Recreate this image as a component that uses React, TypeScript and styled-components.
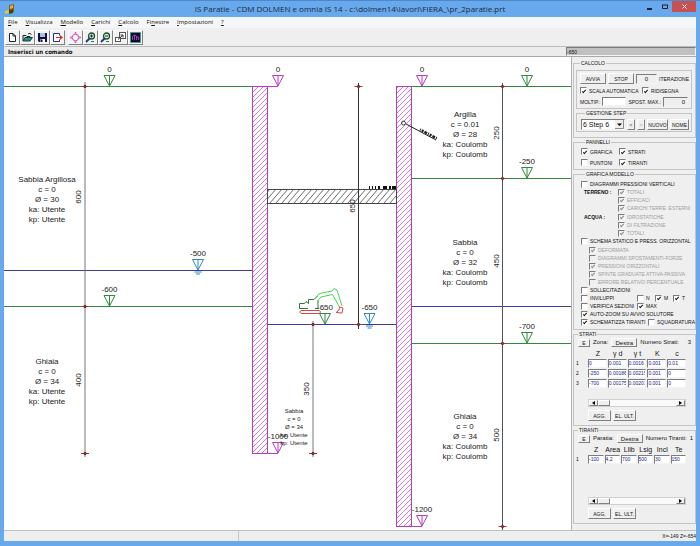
import React, { useState } from "react";
import styled, { createGlobalStyle, css } from "styled-components";

const sans = '"Liberation Sans", Arial, sans-serif';

const GlobalStyle = createGlobalStyle`
  *, *::before, *::after { box-sizing: border-box; }
  body { margin: 0; background: #68a8ec; font-family: ${sans}; color: #111; }
  button, input, select { font: inherit; color: inherit; margin: 0; padding: 0; }
`;

const raised = css`
  border: 1px solid;
  border-color: #fff #808080 #808080 #fff;
`;
const sunken = css`
  border: 1px solid;
  border-color: #7c7c7c #f4f4f4 #f4f4f4 #7c7c7c;
`;

const Window = styled.div`
  display: flex;
  flex-direction: column;
  height: 100vh;
  padding: 0 4px 5px;
  background: #68a8ec;
  border-top: 1px solid #4f88c8;
  overflow: hidden;
`;

const TitleBar = styled.header`
  display: grid;
  grid-template-columns: 70px 1fr 70px;
  height: 16px;
  flex: none;
`;

const AppIcon = styled.svg`
  width: 12px;
  height: 12px;
  margin: 2px 0 0 1px;
`;

const Title = styled.h1`
  margin: 0;
  font: 400 8px/16px "Open Sans", sans-serif;
  text-align: center;
  white-space: nowrap;
  color: #1c2a3c;
`;

const WindowButtons = styled.div`
  display: flex;
  justify-content: flex-end;
  height: 11px;
`;

const WindowButton = styled.button<{ $close?: boolean }>`
  display: grid;
  place-items: center;
  width: ${(p) => (p.$close ? 24 : 15)}px;
  height: 11px;
  border: 0;
  background: ${(p) => (p.$close ? "#c75050" : "transparent")};
`;

const MenuBar = styled.nav`
  display: flex;
  flex: none;
  gap: 8px;
  height: 11px;
  padding-left: 4px;
  background: #f5f6f7;
  font: 6px/11px "Open Sans", sans-serif;
`;

const MenuItem = styled.a`
  color: #111;
  text-decoration: none;
`;

const Toolbar = styled.div`
  display: flex;
  flex: none;
  gap: 3px;
  height: 19px;
  padding: 2px 1px;
  background: #efefef;
  border-bottom: 1px solid #bcbcbc;
`;

const ToolGroup = styled.div`
  display: flex;
`;

const ToolButton = styled.button`
  ${raised}
  display: grid;
  place-items: center;
  width: 15px;
  height: 15px;
  background: #f2f2f2;
`;

const CommandBar = styled.div`
  display: flex;
  flex: none;
  height: 10px;
  background: #ececec;
  border-bottom: 1px solid #a8a8a8;
`;

const Prompt = styled.div`
  flex: 1;
  padding-left: 4px;
  font: 700 6px/10px "DejaVu Sans Condensed", ${sans};
`;

const CommandInput = styled.input`
  ${sunken}
  width: 130px;
  height: 9px;
  background: #c0c0c0;
  font: 5px/7px ${sans};
`;

const Main = styled.main`
  display: flex;
  flex: 1;
  min-height: 0;
  background: #fff;
`;

const Drawing = styled.svg`
  flex: 1;
  min-width: 0;
  height: 100%;
  font-family: ${sans};
  background: #fff;
`;

const Side = styled.aside`
  flex: none;
  width: 125px;
  padding: 2px 0 0 1px;
  background: #efefef;
  border-left: 1px solid #b0b0b0;
  font: 5px/8px ${sans};
  white-space: nowrap;
  overflow: hidden;
`;

const Group = styled.fieldset<{ $pad: string; $inset?: boolean }>`
  min-width: 0;
  margin: 0 ${(p) => (p.$inset ? 3 : 0)}px 0 0;
  padding: ${(p) => p.$pad};
  border: 1px solid #c4c4c4;
`;

const Legend = styled.legend`
  margin-left: 4px;
  padding: 0 1px;
  font: 5px/8px ${sans};
`;

const Frame = styled.div`
  display: grid;
  grid-template-rows: 11px 9px 9px;
  row-gap: 2px;
  margin-right: 3px;
  height: 39px;
  padding: 2px 3px;
  border: 1px solid #c4c4c4;
`;

const Row = styled.div<{ $h?: number; $gap?: number; $left?: number; $top?: number }>`
  display: flex;
  align-items: center;
  height: ${(p) => p.$h ?? 8}px;
  gap: ${(p) => p.$gap ?? 0}px;
  padding-left: ${(p) => p.$left ?? 0}px;
  margin-top: ${(p) => p.$top ?? 0}px;
`;

const PushButton = styled.button<{ $w: number; $h?: number; $big?: boolean }>`
  ${raised}
  display: grid;
  place-items: center;
  flex: none;
  width: ${(p) => p.$w}px;
  height: ${(p) => p.$h ?? 11}px;
  background: #efefef;
  font: ${(p) => (p.$big ? 6 : 5)}px/6px ${sans};
  &:disabled { color: #999; }
`;

const Readout = styled.output<{ $w: number }>`
  ${sunken}
  flex: none;
  width: ${(p) => p.$w}px;
  height: 10px;
  padding: 0 2px;
  font: 6px/8px ${sans};
  text-align: ${(p) => (p.$w > 22 ? "right" : "center")};
`;

const Field = styled.input`
  ${sunken}
  width: 24px;
  height: 9px;
  background: #fff;
`;

const StepSelect = styled.select`
  ${sunken}
  width: 44px;
  height: 11px;
  padding-left: 1px;
  appearance: none;
  border-radius: 0;
  background: #fff;
  font: 7px/9px ${sans};
`;

const SelectWrap = styled.div`
  position: relative;
  display: flex;
  svg {
    position: absolute;
    right: 1px;
    top: 1px;
    pointer-events: none;
  }
`;

const CheckLabel = styled.label<{ $w?: number }>`
  display: flex;
  align-items: center;
  gap: 2px;
  width: ${(p) => (p.$w ? p.$w + "px" : "auto")};
  flex: none;
  font: 5px/8px ${sans};
  &:has(input:disabled) { color: #9c9c9c; }
`;

const Check = styled.input`
  ${sunken}
  appearance: none;
  display: grid;
  place-items: center;
  width: 7px;
  height: 7px;
  background: #fff;
  color: #111;
  &:disabled { background: #efefef; color: #8a8a8a; }
  &:checked::before {
    content: "";
    width: 2px;
    height: 4px;
    border: solid currentColor;
    border-width: 0 1px 1px 0;
    transform: rotate(42deg);
  }
`;

const Caption = styled.span<{ $w: number }>`
  width: ${(p) => p.$w}px;
  padding-left: 3px;
  font-weight: 700;
`;

const Head = styled.div`
  display: flex;
  align-items: center;
  gap: 3px;
  height: 9px;
  padding: 0 4px 0 4px;
  font: 6px/9px ${sans};
`;

const Count = styled.output`
  margin-left: auto;
`;

const Grid = styled.table`
  margin-top: 1px;
  border-collapse: collapse;
  table-layout: fixed;
  width: 113px;
  th {
    padding: 0;
    height: 7px;
    font: 7px/7px ${sans};
    text-align: center;
  }
  td { padding: 0 1px 0 0; height: 10px; }
  td:first-child { width: 14px; padding-left: 2px; font: 5px/8px ${sans}; }
`;

const Cell = styled.input`
  ${sunken}
  display: block;
  width: 100%;
  height: 9px;
  background: #fff;
  color: #20208c;
  font: 5px/7px ${sans};
`;

const ScrollBar = styled.div<{ $top: number }>`
  display: grid;
  grid-template-columns: 9px 12px 1fr 9px;
  width: 98px;
  height: 8px;
  margin: ${(p) => p.$top}px 0 3px 14px;
  background: #fafafa;
  border: 1px solid #d0d0d0;
`;

const ScrollPart = styled.button`
  ${raised}
  display: grid;
  place-items: center;
  background: #efefef;
`;

const Actions = styled.div`
  display: flex;
  gap: 2px;
  padding-left: 14px;
`;

const StatusBar = styled.footer`
  display: grid;
  grid-template-columns: 234px 1fr;
  column-gap: 1px;
  flex: none;
  height: 11px;
  background: #c4c4c4;
  border-top: 1px solid #c0c0c0;
  font: 5px/10px ${sans};
  text-align: right;
  white-space: nowrap;
  span { background: #eee; }
`;

function Tick({ label, on, off, w }: { label: string; on?: boolean; off?: boolean; w?: number }) {
  const [checked, setChecked] = useState(!!on);
  return (
    <CheckLabel $w={w}>
      <Check type="checkbox" checked={checked} disabled={off} onChange={() => setChecked(!checked)} />
      {label}
    </CheckLabel>
  );
}

const GREEN = "#2f8a3c";
const BLUE = "#3c3c9c";
const PINK = "#b83cc0";
const CYAN = "#2c8cc0";

function Level({ x, y, text, color, water }: { x: number; y: number; text: string; color: string; water?: boolean }) {
  return (
    <g stroke={color} fill="none" strokeWidth="1">
      <path d={`M${x - 5.5} ${y - 10.5}H${x + 5.5}L${x} ${y}ZM${x} ${y - 10}V${y}`} />
      {water && <path d={`M${x - 3.5} ${y + 2}h7M${x - 2} ${y + 4}h4`} />}
      <text x={x} y={y - 14} textAnchor="middle" fontSize="8" fill="#222" stroke="none">{text}</text>
    </g>
  );
}

function Soil({ x, y, lines, small }: { x: number; y: number; lines: string[]; small?: boolean }) {
  return (
    <g fontSize={small ? 6 : 8} fill="#222" textAnchor="middle">
      {lines.map((line, i) => (
        <text key={i} x={x} y={y + i * (small ? 8 : 10)}>{line}</text>
      ))}
    </g>
  );
}

function Dimension({ x, from, to, marks, color }: { x: number; from: number; to: number; marks: number[]; color: string }) {
  return (
    <g fill="none">
      <path d={`M${x} ${from}V${to}`} stroke={color} />
      {marks.map((m) => (
        <g key={m}>
          <path d={`M${x - 4} ${m}h8`} stroke="#b03838" />
          <circle cx={x} cy={m} r="1.2" stroke="#5a2020" />
        </g>
      ))}
    </g>
  );
}

function Turned({ x, y, children }: { x: number; y: number; children: string }) {
  return (
    <text transform={`translate(${x} ${y}) rotate(-90)`} textAnchor="middle" fontSize="8" fill="#222">
      {children}
    </text>
  );
}

function Section() {
  return (
    <Drawing viewBox="4 57 567 473" role="img" aria-label="Sezione delle paratie">
      <defs>
        <pattern id="wall" width="5" height="5" patternUnits="userSpaceOnUse">
          <path d="M-1 6L6 -1M-1 1L1 -1M4 6L6 4" stroke="#c05cc8" strokeWidth="0.8" />
        </pattern>
        <pattern id="slab" width="6" height="7" patternUnits="userSpaceOnUse">
          <path d="M0 7L6 0M-1 1.2L1 -1.2M5 8.2L7 5.8" stroke="#444" strokeWidth="0.8" />
        </pattern>
      </defs>
      <g stroke={GREEN}>
        <path d="M4 86.5H252M4 306.5H252M411 86.5H571M411 178.5H571M411 343.5H571" />
      </g>
      <path d="M4 270.5H252M267 324.5H396M411 306.5H571" stroke={BLUE} />
      <g stroke={PINK} fill="url(#wall)">
        <rect x="252.5" y="86.5" width="15" height="367" />
        <rect x="396.5" y="86.5" width="15" height="440" />
        <path d="M267 86.5H278M267 453.5H278M411 526.5H422" />
      </g>
      <rect x="267.5" y="189.5" width="129" height="14" fill="url(#slab)" stroke="#444" />
      <path d="M369 187.5h1m2 0h1m2 0h1m2 0h2m3 0h4m2 0h2m1 0h4" stroke="#111" strokeWidth="3" />

      <Dimension x={85} from={82} to={457} marks={[86.5, 306.5, 453.5]} color="#777" />
      <Dimension x={358.5} from={83} to={329} marks={[86.5, 324.5]} color="#333" />
      <Dimension x={313} from={321} to={457} marks={[324.5, 453.5]} color="#777" />
      <Dimension x={502.5} from={83} to={530} marks={[86.5, 178.5, 343.5, 526.5]} color="#555" />

      <g fill="none" strokeWidth="1">
        <path d="M299.500 308.500V303.500H304.500L306 301.500L308.500 303.500V299.500H314L317.500 296M299.500 308.500H308M315 308.500H318V300" stroke="#2c7c34" />
        <path d="M316 298L318 294.500L322 293L332 291L334 288.500L337 290L342 306M318.500 300L321 297L332.500 294.500L339.500 307" stroke="#4cd454" />
        <path d="M301 310.500H319.500Q321.500 312 319.500 313.500H301Q298.500 312 301 310.500ZM339.500 307L343 308L342 313L336 312.500L339 310Z" stroke="#d84848" />
      </g>

      <Level x={109.5} y={86} text="0" color={GREEN} />
      <Level x={278} y={86} text="0" color={PINK} />
      <Level x={422} y={86} text="0" color={PINK} />
      <Level x={527} y={86} text="0" color={GREEN} />
      <Level x={198} y={270} text="-500" color={CYAN} water />
      <Level x={109.5} y={306} text="-600" color={GREEN} />
      <Level x={325} y={324} text="-650" color={GREEN} />
      <Level x={369.5} y={324} text="-650" color={CYAN} water />
      <Level x={278} y={453} text="-1000" color={PINK} />
      <Level x={422} y={526} text="-1200" color={PINK} />
      <Level x={527} y={178} text="-250" color={GREEN} />
      <Level x={527} y={343} text="-700" color={GREEN} />

      <Turned x={81} y={197}>600</Turned>
      <Turned x={81} y={380}>400</Turned>
      <Turned x={355} y={206}>650</Turned>
      <Turned x={309} y={389}>350</Turned>
      <Turned x={499} y={133}>250</Turned>
      <Turned x={499} y={261}>450</Turned>
      <Turned x={499} y={435}>500</Turned>

      <Soil x={47} y={182} lines={["Sabbia Argillosa", "c = 0", "Ø = 30", "ka: Utente", "kp: Utente"]} />
      <Soil x={47} y={364} lines={["Ghiaia", "c = 0", "Ø = 34", "ka: Utente", "kp: Utente"]} />
      <Soil x={465} y={117} lines={["Argilla", "c = 0.01", "Ø = 28", "ka: Coulomb", "kp: Coulomb"]} />
      <Soil x={465} y={245} lines={["Sabbia", "c = 0", "Ø = 32", "ka: Coulomb", "kp: Coulomb"]} />
      <Soil x={465} y={419} lines={["Ghiaia", "c = 0", "Ø = 34", "ka: Coulomb", "kp: Coulomb"]} />
      <Soil small x={294} y={413} lines={["Sabbia", "c = 0", "Ø = 34", "ka: Utente", "kp: Utente"]} />

      <g stroke="#222" fill="none">
        <circle cx="403.500" cy="123" r="2" strokeWidth="0.800" />
        <path d="M406 124L436 140" />
        <path d="M420 129.500L437 138.500" strokeWidth="2.500" strokeDasharray="1 1 2 1 3 1" />
      </g>
    </Drawing>
  );
}

const toolIcons: React.ReactNode[][] = [
  [
    <path d="M2.500 1.500H6L8.500 4V9.500H2.500ZM6 1.500V4H8.500" fill="#fff" stroke="#222" />,
    <>
      <path d="M1 9V3.500H4L5 4.500H8V6" fill="#e8e8a0" stroke="#222" />
      <path d="M1 9L3 5.500H10.500L8 9Z" fill="#2c8c8c" stroke="#144" />
      <path d="M6 2Q8 0.500 9.500 2.500" fill="none" stroke="#222" />
    </>,
    <>
      <path d="M1 1H10V10H2L1 9Z" fill="#101048" />
      <path d="M3 1H8V5H3Z" fill="#a8c0e8" />
      <path d="M3.500 7H8V10H3.500Z" fill="#fff" />
      <path d="M4 7.500H5.500V10H4Z" fill="#101048" />
    </>,
    <>
      <path d="M7.500 3.500V1.500H1.500V9.500H7.500V7.500" fill="#fff" stroke="#2828a0" />
      <path d="M4 5.500H9" stroke="#d82828" />
      <path d="M8 3L11 5.500L8 8Z" fill="#d82828" />
    </>,
  ],
  [
    <>
      <circle cx="5.500" cy="5.500" r="3.200" fill="#fff" stroke="#d040b8" />
      <path d="M4.500 1.500L5.500 0L6.500 1.500M4.500 9.500L5.500 11L6.500 9.500M1.500 4.500L0 5.500L1.500 6.500M9.500 4.500L11 5.500L9.500 6.500" fill="#d040b8" stroke="#d040b8" strokeWidth="0.600" />
    </>,
    <>
      <path d="M1 10L4.500 6.500" stroke="#203c80" strokeWidth="2" />
      <circle cx="6.500" cy="4" r="3" fill="#d8f0e0" stroke="#1c4c34" strokeWidth="1.300" />
      <path d="M5 4H8M6.500 2.500V5.500" stroke="#103020" />
      <path d="M6 9.500H9" stroke="#2c7c34" />
    </>,
    <>
      <path d="M1 10L4.500 6.500" stroke="#203c80" strokeWidth="2" />
      <circle cx="6.500" cy="4" r="3" fill="#d8f0e0" stroke="#1c4c34" strokeWidth="1.300" />
      <path d="M5 4H8" stroke="#103020" />
      <path d="M6 9.500H9" stroke="#2c7c34" />
    </>,
    <>
      <rect x="4.500" y="0.500" width="6" height="6" fill="#fff" stroke="#555" />
      <rect x="0.500" y="5.500" width="5" height="4" fill="#fff" stroke="#555" />
      <path d="M3 7.500L8 3M5.500 3H8V5.500" fill="none" stroke="#333" />
    </>,
    <>
      <rect x="0.500" y="0.500" width="10" height="10" fill="#101020" stroke="#2c9c9c" strokeDasharray="2 1" />
      <path d="M2.500 8V4.500L4.500 3L6.500 4V8M6.500 5H8.500V8M4.500 3V8" fill="none" stroke="#a03cc0" />
    </>,
  ],
];
const toolNames = [
  ["Nuovo", "Apri", "Salva", "Esci"],
  ["Zoom tutto", "Zoom avanti", "Zoom indietro", "Zoom finestra", "Ridisegna"],
];

const menus = [["", "F", "ile"], ["", "V", "isualizza"], ["", "M", "odello"], ["", "C", "arichi"], ["", "C", "alcolo"], ["Fi", "n", "estre"], ["", "I", "mpostazioni"], ["", "?", ""]];

function Scroller({ top }: { top: number }) {
  return (
    <ScrollBar $top={top}>
      <ScrollPart aria-label="Scorri a sinistra"><svg width="3" height="4"><path d="M3 0V4L0 2Z" /></svg></ScrollPart>
      <ScrollPart aria-label="Cursore" />
      <span />
      <ScrollPart aria-label="Scorri a destra"><svg width="3" height="4"><path d="M0 0V4L3 2Z" /></svg></ScrollPart>
    </ScrollBar>
  );
}

function Table({ heads, rows }: { heads: string[]; rows: string[][] }) {
  return (
    <Grid>
      <thead>
        <tr>
          <td />
          {heads.map((h) => <th key={h} scope="col">{h}</th>)}
        </tr>
      </thead>
      <tbody>
        {rows.map((row, r) => (
          <tr key={r}>
            <td>{r + 1}</td>
            {row.map((value, c) => (
              <td key={c}><Cell aria-label={`${heads[c]} ${r + 1}`} defaultValue={value} /></td>
            ))}
          </tr>
        ))}
      </tbody>
    </Grid>
  );
}

export default function App() {
  return (
    <Window>
      <GlobalStyle />
      <TitleBar>
        <AppIcon viewBox="0 0 12 12" aria-hidden="true">
          <path d="M4 2L9 1V9L4 10Z" fill="#8c5c1c" />
          <path d="M5 3L8 2V5L5 6Z" fill="#e8b030" />
          <path d="M0 8L4 7V10L0 11Z" fill="#f0c040" />
          <path d="M4 7L8 6.500V10L4 11Z" fill="#384820" />
        </AppIcon>
        <Title>IS Paratie - CDM DOLMEN e omnia IS 14 - c:\dolmen14\lavori\FIERA_\pr_2paratie.prt</Title>
        <WindowButtons>
          <WindowButton aria-label="Riduci"><svg width="5" height="7"><path d="M0 6H5" stroke="#222" strokeWidth="2" /></svg></WindowButton>
          <WindowButton aria-label="Ingrandisci"><svg width="6" height="5"><path d="M0.500 1V4.500H5.500V1M0 1H6" fill="none" stroke="#222" /></svg></WindowButton>
          <WindowButton $close aria-label="Chiudi"><svg width="5" height="5"><path d="M0.500 0.500L4.500 4.500M4.500 0.500L0.500 4.500" stroke="#fff" /></svg></WindowButton>
        </WindowButtons>
      </TitleBar>
      <MenuBar>
        {menus.map(([a, b, c]) => (
          <MenuItem key={b + c} href="#">{a}<u>{b}</u>{c}</MenuItem>
        ))}
      </MenuBar>
      <Toolbar>
        {toolIcons.map((group, g) => (
          <ToolGroup key={g}>
            {group.map((icon, i) => (
              <ToolButton key={i} aria-label={toolNames[g][i]}>
                <svg width="11" height="11" viewBox="0 0 11 11">{icon}</svg>
              </ToolButton>
            ))}
          </ToolGroup>
        ))}
      </Toolbar>
      <CommandBar>
        <Prompt>Inserisci un comando</Prompt>
        <CommandInput aria-label="Comando" defaultValue="-650" />
      </CommandBar>
      <Main>
        <Section />
        <Side>
          <Group $pad="3px 0 5px 2px">
            <Legend>CALCOLO</Legend>
            <Frame>
              <Row $h={11} $gap={2}>
                <PushButton $w={26}>AVVIA</PushButton>
                <PushButton $w={26}>STOP</PushButton>
                <Readout $w={21}>0</Readout>
                ITERAZIONE
              </Row>
              <Row $h={9}>
                <Tick label="SCALA AUTOMATICA" on w={62} />
                <Tick label="RIDISEGNA" on />
              </Row>
              <Row $h={9} $gap={2}>
                <label htmlFor="moltip">MOLTIP.:</label>
                <Field id="moltip" />
                <span>SPOST. MAX.:</span>
                <Readout $w={25}>0</Readout>
              </Row>
            </Frame>
            <Group $inset $pad="2px 0 1px 4px">
              <Legend>GESTIONE STEP</Legend>
              <Row $h={11} $gap={2}>
                <SelectWrap>
                  <StepSelect aria-label="Step"><option>6 Step 6</option></StepSelect>
                  <svg width="9" height="9"><path d="M0 0H9V9H0Z" fill="#eee" /><path d="M0 8.500H8.500V0" fill="none" stroke="#8c8c8c" /><path d="M2 3.500H7L4.500 6Z" /></svg>
                </SelectWrap>
                <PushButton $w={8} aria-label="Step precedente">&lt;</PushButton>
                <PushButton $w={8} disabled aria-label="Step successivo">&gt;</PushButton>
                <PushButton $w={21}>NUOVO</PushButton>
                <PushButton $w={19}>NOME</PushButton>
              </Row>
            </Group>
          </Group>
          <Group $pad="0 0 1px 7px">
            <Legend>PANNELLI</Legend>
            <Row $h={11}><Tick label="GRAFICA" on w={38} /><Tick label="STRATI" on /></Row>
            <Row $h={11}><Tick label="PUNTONI" w={38} /><Tick label="TIRANTI" on /></Row>
          </Group>
          <Group $pad="2px 0 3px 7px">
            <Legend>GRAFICA MODELLO</Legend>
            <Row><Tick label="DIAGRAMMI PRESSIONI VERTICALI" /></Row>
            <Row><Caption $w={37}>TERRENO :</Caption><Tick label="TOTALI" on off /></Row>
            <Row $left={37}><Tick label="EFFICACI" on off /></Row>
            <Row $left={37}><Tick label="CARICHI TERRE. ESTERNI" on off /></Row>
            <Row $top={1}><Caption $w={37}>ACQUA :</Caption><Tick label="IDROSTATICHE" on off /></Row>
            <Row $left={37}><Tick label="DI FILTRAZIONE" on off /></Row>
            <Row $left={37}><Tick label="TOTALI" on off /></Row>
            <Row><Tick label="SCHEMA STATICO E PRESS. ORIZZONTAL" /></Row>
            <Row $left={8} $top={1}><Tick label="DEFORMATA" on off /></Row>
            <Row $left={8}><Tick label="DIAGRAMMI SPOSTAMENTI-FORZE" off /></Row>
            <Row $left={8}><Tick label="PRESSIONI ORIZZONTALI" on off /></Row>
            <Row $left={8}><Tick label="SPINTE GRADUATE ATTIVA-PASSIVA" on off /></Row>
            <Row $left={8}><Tick label="ERRORE RELATIVO PERCENTUALE" off /></Row>
            <Row><Tick label="SOLLECITAZIONI" /></Row>
            <Row><Tick label="INVILUPPI" w={56} /><Tick label="N" w={18} /><Tick label="M" on w={18} /><Tick label="T" on /></Row>
            <Row><Tick label="VERIFICA SEZIONI" w={56} /><Tick label="MAX" on /></Row>
            <Row><Tick label="AUTO-ZOOM SU AVVIO SOLUTORE" on /></Row>
            <Row><Tick label="SCHEMATIZZA TIRANTI" on w={67} /><Tick label="SQUADRATURA" /></Row>
          </Group>
          <Group $pad="0 0 4px 0">
            <Legend>STRATI</Legend>
            <Head>
              <PushButton $w={12} $h={8}>E</PushButton>
              <span>Zona:</span>
              <PushButton $w={26} $h={9} $big>Destra</PushButton>
              <span>Numero Strati:</span>
              <Count>3</Count>
            </Head>
            <Table
              heads={["Z", "γ d", "γ t", "K", "c"]}
              rows={[
                ["0", "0.001", "0.0016", "0.001", "0.01"],
                ["-250", "0.00186", "0.00215", "0.001", "0"],
                ["-700", "0.00175", "0.00201", "0.001", "0"],
              ]}
            />
            <Scroller top={11} />
            <Actions><PushButton $w={23}>AGG.</PushButton><PushButton $w={23}>EL. ULT.</PushButton></Actions>
          </Group>
          <Group $pad="0 0 4px 0">
            <Legend>TIRANTI</Legend>
            <Head>
              <PushButton $w={12} $h={8}>E</PushButton>
              <span>Paratia:</span>
              <PushButton $w={26} $h={9} $big>Destra</PushButton>
              <span>Numero Tiranti:</span>
              <Count>1</Count>
            </Head>
            <Table heads={["Z", "Area", "Llib", "Lsig", "Incl", "Te"]} rows={[["-100", "4.2", "700", "500", "30", "150"]]} />
            <Scroller top={33} />
            <Actions><PushButton $w={23}>AGG.</PushButton><PushButton $w={23}>EL. ULT.</PushButton></Actions>
          </Group>
        </Side>
      </Main>
      <StatusBar><span /><span>X=-149 Z=-654</span></StatusBar>
    </Window>
  );
}
